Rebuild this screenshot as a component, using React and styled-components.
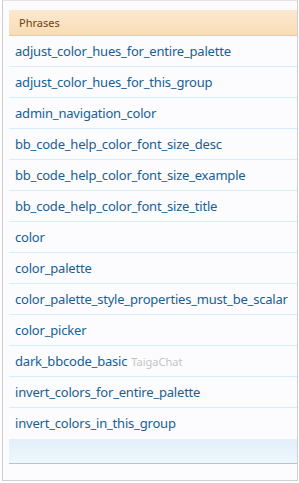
import React from "react";
import styled, { createGlobalStyle } from "styled-components";

const Global = createGlobalStyle`
  html, body { margin: 0; padding: 0; background: #ffffff; }
  body { font-family: "Noto Sans", "DejaVu Sans", sans-serif; }
`;

const Frame = styled.div`
  box-sizing: border-box;
  width: 296px;
  height: 481px;
  margin-left: 2px;
  border: 1px solid #cfcfcf;
  border-top-color: #e4e4e4;
  background: #fcfcff;
  padding: 9px 0 0 6px;
`;

const Header = styled.div`
  height: 25px;
  display: flex;
  align-items: center;
  padding-left: 10px;
  background: linear-gradient(to bottom, #fce9d0 0%, #f9dcb4 100%);
  border-bottom: 1px solid #f5c884;
  color: #6d3f14;
  font-size: 11px;
`;

const Row = styled.div`
  height: 30px;
  display: flex;
  align-items: center;
  padding-left: 6px;
  border-bottom: 1px solid ${(p) => (p.$last ? "transparent" : "#d7edfc")};
  color: #176093;
  font-size: 13px;
  letter-spacing: -0.2px;
  white-space: nowrap;
`;

const Muted = styled.span`
  color: #c4c4c4;
  font-size: 11px;
  letter-spacing: 0;
  margin-left: 4px;
`;

const Footer = styled.div`
  height: 24px;
  background: linear-gradient(to bottom, #e2f0fb 0%, #eef6fd 100%);
  border-bottom: 1px solid #a5cae4;
`;

const phrases = [
  "adjust_color_hues_for_entire_palette",
  "adjust_color_hues_for_this_group",
  "admin_navigation_color",
  "bb_code_help_color_font_size_desc",
  "bb_code_help_color_font_size_example",
  "bb_code_help_color_font_size_title",
  "color",
  "color_palette",
  "color_palette_style_properties_must_be_scalar",
  "color_picker",
  "dark_bbcode_basic",
  "invert_colors_for_entire_palette",
  "invert_colors_in_this_group",
];

export default function App() {
  return (
    <>
      <Global />
      <Frame>
        <Header>Phrases</Header>
        {phrases.map((p, i) => (
          <Row key={p} $last={i === phrases.length - 1}>
            {p}
            {p === "dark_bbcode_basic" && <Muted>TaigaChat</Muted>}
          </Row>
        ))}
        <Footer />
      </Frame>
    </>
  );
}
